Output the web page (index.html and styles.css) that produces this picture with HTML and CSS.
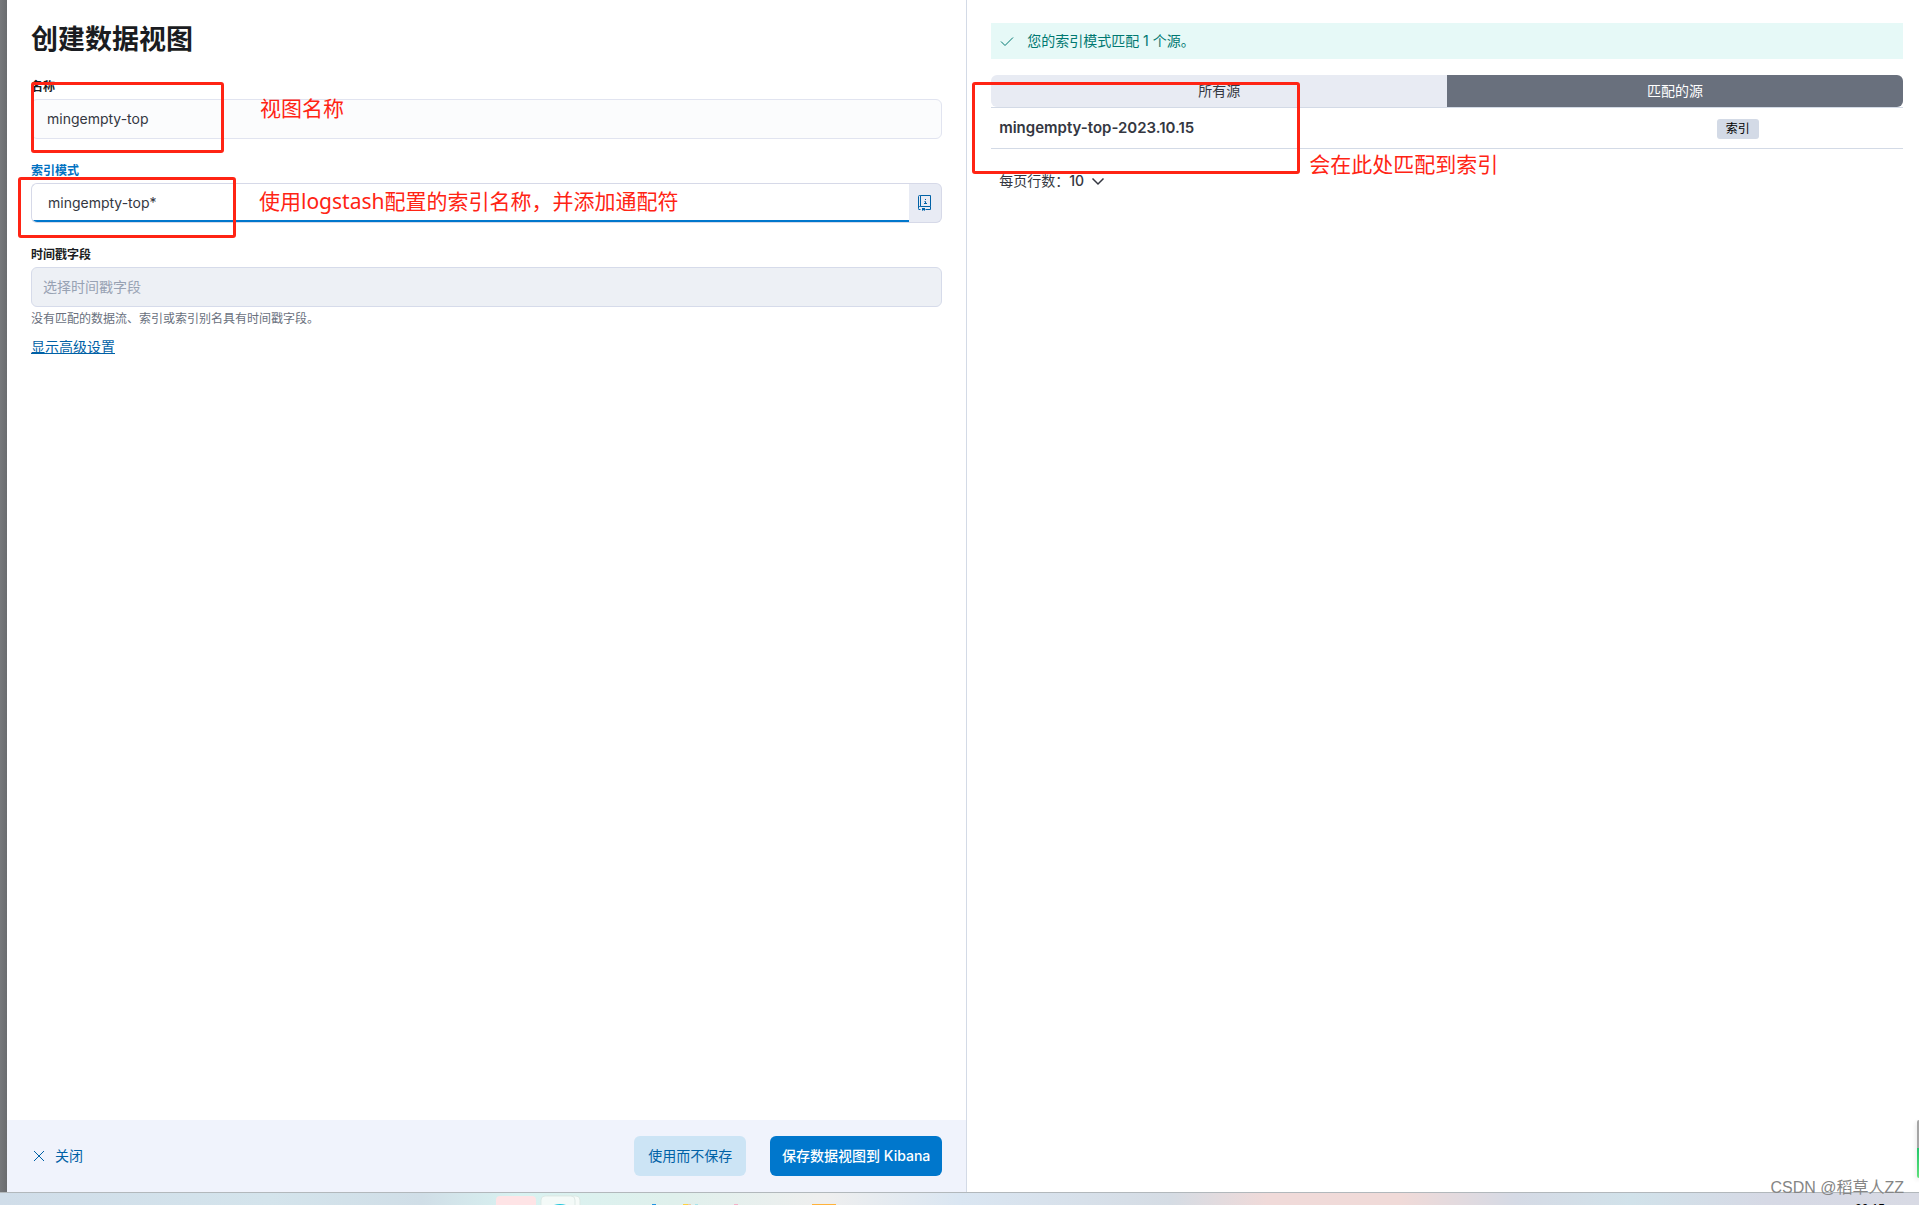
FILE: index.html
```html
<!DOCTYPE html>
<html lang="zh-CN">
<head>
<meta charset="utf-8">
<title>创建数据视图</title>
<link rel="stylesheet" href="styles.css">
</head>
<body>
<div class="workspace">
  <div class="mask"></div>
  <main class="editor">
    <form class="form">
      <h1 class="title">创建数据视图</h1>
      <div class="row">
        <label class="label" for="view-name">名称</label>
        <input class="field" id="view-name" type="text" value="mingempty-top">
      </div>
      <div class="row">
        <label class="label label-active" for="pattern">索引模式</label>
        <div class="group">
          <input class="field field-active" id="pattern" type="text" value="mingempty-top*">
          <button class="append" type="button" aria-label="帮助">
            <svg width="16" height="16" viewBox="0 0 16 16" fill="none" stroke="currentColor">
              <path d="M3.500 .5h10v11h-10zM3.500 .5h-1a1 1 0 0 0-1 1v12M1.500 13.500v-1a1 1 0 0 1 1-1h1M1.500 14.500h2M8.500 14.500h5v-3M7.500 6.500h1v2M7 8.500h3"/>
              <path d="M8 4h1v1H8zM5 13h3v3l-1.500-1L5 16z" fill="currentColor" stroke="none"/>
            </svg>
          </button>
        </div>
      </div>
      <div class="row">
        <label class="label" for="timestamp">时间戳字段</label>
        <input class="field field-disabled" id="timestamp" type="text" placeholder="选择时间戳字段" disabled>
        <p class="help">没有匹配的数据流、索引或索引别名具有时间戳字段。</p>
        <a class="advanced" href="#">显示高级设置</a>
      </div>
    </form>
    <footer class="footer">
      <button class="btn btn-close" type="button">
        <svg width="16" height="16" viewBox="0 0 16 16" fill="none" stroke="currentColor"><path d="M3 3l10 10M13 3L3 13"/></svg>
        关闭
      </button>
      <div class="actions">
        <button class="btn btn-light" type="button">使用而不保存</button>
        <button class="btn btn-primary" type="button">保存数据视图到 Kibana</button>
      </div>
    </footer>
    <div class="mark mark-name"></div>
    <div class="mark mark-pattern"></div>
    <p class="note note-name">视图名称</p>
    <p class="note note-pattern">使用logstash配置的索引名称，并添加通配符</p>
  </main>
  <aside class="preview">
    <div class="callout">
      <svg width="16" height="16" viewBox="0 0 16 16" fill="none" stroke="currentColor"><path d="M2 8.500l4 4 8-8"/></svg>
      您的索引模式匹配 1 个源。
    </div>
    <div class="tabs">
      <button class="tab" type="button">所有源</button>
      <button class="tab tab-selected" type="button">匹配的源</button>
    </div>
    <table class="sources">
      <tbody>
        <tr><td class="source-name">mingempty-top-2023.10.15</td><td><span class="badge">索引</span></td></tr>
      </tbody>
    </table>
    <button class="pager" type="button">
      <span>每页行数：<b>10</b></span>
      <svg width="16" height="16" viewBox="0 0 16 16" fill="none" stroke="currentColor" stroke-width="1.500"><path d="M2.500 5.500L8 11l5.500-5.500"/></svg>
    </button>
    <div class="mark mark-source"></div>
    <p class="note note-source">会在此处匹配到索引</p>
    <div class="side-widget"></div>
  </aside>
</div>
<div class="taskbar">
  <svg class="apps" width="340" height="12" viewBox="0 0 340 12">
    <rect x="6" y="3" width="40" height="14" rx="4" fill="#fee4e6"/>
    <rect x="54" y="3" width="36" height="14" rx="4" fill="#f6fbf9" stroke="#dce9e5"/>
    <rect x="51" y="3" width="34" height="14" rx="4" fill="#f4faf8" stroke="#dde9e6"/>
    <path d="M64 12q6-2 12 0z" fill="#20c5dc"/>
    <path d="M162 11h4v1h-4z" fill="#2194e2"/>
    <path d="M193 11h5v1h-5z" fill="#ffd23e"/>
    <path d="M198 11h3v1h-3z" fill="#f0c8a8"/>
    <path d="M205 11h3v1h-3z" fill="#a8e4ea"/>
    <path d="M244 11h4v1h-4z" fill="#f4b0c8"/>
    <path d="M322 11h24v1h-24z" fill="#ffb23a"/>
  </svg>
  <span class="clock">20:15</span>
</div>
<div class="watermark">CSDN @稻草人ZZ</div>
</body>
</html>
```
FILE: styles.css
```css
* { box-sizing: border-box; }

body {
  margin: 0;
  height: 100vh;
  display: flex;
  flex-direction: column;
  overflow: hidden;
  position: relative;
  background: #fff;
  color: #343741;
  font: 14px/20px Inter, "Noto Sans CJK SC", sans-serif;
}

p, h1 { margin: 0; }
button, input { font: inherit; color: inherit; margin: 0; }
button { border: 0; padding: 0; background: none; }

.workspace { flex: 1; display: flex; min-height: 0; }
.mask { width: 7px; background: linear-gradient(90deg, #76787b, #6a6c6f); }

/* Editor pane */
.editor {
  flex: 1;
  min-width: 0;
  display: flex;
  flex-direction: column;
  justify-content: space-between;
  position: relative;
  border-right: 1px solid #d3dae6;
}
.form { display: flex; flex-direction: column; gap: 23px; padding: 24px 24px 0; }
.title { font-size: 27px; line-height: 31px; font-weight: 700; color: #1a1c21; }
.row { display: flex; flex-direction: column; align-items: flex-start; }
.label {
  font-size: 12px;
  line-height: 18px;
  margin-bottom: 3px;
  font-weight: 600;
  color: #1a1c21;
}
.label-active { color: #0071c2; }
.field {
  width: 100%;
  height: 40px;
  padding: 0 15px 2px;
  border: 1px solid #e1e4f0;
  border-radius: 6px;
  background: #fbfcfd;
  outline: 0;
}
.group { display: flex; width: 100%; }
.field-active {
  flex: 1;
  width: auto;
  padding: 0 16px 2px;
  border-color: #d6d9e8;
  border-right: 0;
  border-radius: 6px 0 0 6px;
  background: linear-gradient(#0077cc, #0077cc) 0 100% / 100% 2px no-repeat #fff;
}
.append {
  width: 33px;
  display: flex;
  align-items: center;
  justify-content: center;
  border: 1px solid #d6d9e8;
  border-left: 0;
  border-radius: 0 6px 6px 0;
  background: #e8ebf4;
  color: #0061a6;
}
.field-disabled { padding: 0 11px 2px; background: #edf0f5; border-color: #d6dbea; }
.field-disabled::placeholder { color: #98a2b3; opacity: 1; }
.help { font-size: 12px; line-height: 18px; margin: 3px 0 9px; color: #69707d; }
.advanced { color: #0061a6; text-decoration: underline; }

.footer {
  display: flex;
  justify-content: space-between;
  padding: 16px 24px;
  background: #f0f3fc;
}
.actions { display: flex; gap: 24px; }
.btn {
  height: 40px;
  display: flex;
  align-items: center;
  justify-content: center;
  border-radius: 6px;
  font-weight: 500;
  white-space: nowrap;
}
.btn-close { gap: 8px; color: #0061a6; font-weight: 400; }
.btn-light { width: 112px; background: #cce4f5; color: #0061a6; font-weight: 400; }
.btn-primary { width: 172px; background: #0077cc; color: #fff; }

/* Preview pane */
.preview {
  flex: 0 0 49.600%;
  display: flex;
  flex-direction: column;
  position: relative;
  padding: 23px 16px 0 24px;
}
.callout {
  display: flex;
  align-items: center;
  gap: 12px;
  height: 36px;
  padding: 0 8px;
  margin-bottom: 16px;
  background: #e6f9f7;
  color: #007871;
}
.tabs { display: flex; }
.tab { flex: 1; height: 32px; background: #e8ebf3; border-radius: 6px 0 0 6px; }
.tab-selected { background: #69707d; color: #fff; border-radius: 0 6px 6px 0; }
.sources { width: 100%; border-collapse: separate; border-spacing: 0; table-layout: fixed; }
.sources td {
  height: 42px;
  padding: 0 8px;
  border-top: 1px solid #d3dae6;
  border-bottom: 1px solid #d3dae6;
}
.sources .source-name { width: 78.700%; font-size: 15px; font-weight: 600; }
.badge {
  display: inline-block;
  padding: 0 9px;
  border-radius: 3px;
  background: #d3dae6;
  color: #000;
  font-size: 12px;
  line-height: 20px;
}
.pager {
  align-self: flex-start;
  display: flex;
  align-items: center;
  gap: 6px;
  margin: 22px 8px 0;
}
.pager b { font-weight: 500; }

/* Annotations drawn over the page */
.mark { position: absolute; border: 3px solid #ff2414; border-radius: 3px; pointer-events: none; }
.mark-name { left: 24px; top: 82px; width: 193px; height: 71px; }
.mark-pattern { left: 11px; top: 177px; width: 218px; height: 61px; }
.mark-source { left: 5px; top: 82px; width: 328px; height: 92px; }
.note {
  position: absolute;
  color: #ff2414;
  font: 21px/30px "Noto Sans", "Noto Sans CJK SC", sans-serif;
  white-space: nowrap;
}
.note-name { left: 253px; top: 93px; }
.note-pattern { left: 252px; top: 186px; }
.note-source { left: 342px; top: 149px; }
.side-widget {
  position: absolute;
  right: 0;
  bottom: 14px;
  width: 2px;
  height: 58px;
  border-radius: 2px 0 0 2px;
  background: linear-gradient(#a5a5a5 48%, #22c76a 48%, #5fe07a);
  box-shadow: 0 2px 5px #00000030;
}

/* Desktop taskbar */
.taskbar {
  height: 13px;
  display: flex;
  justify-content: space-between;
  overflow: hidden;
  padding: 0 34px 0 490px;
  border-top: 1px solid #b2b8bc;
  background: linear-gradient(90deg, #d0dde9 0, #d4e4ec 14%, #d0dee7 22%, #d9f2f1 27%, #dff0ec 35%, #efefef 43%, #dae6f2 50%, #d5dce4 61%, #f0dad9 66%, #f0dad8 73%, #d5dae5 79%, #d1e2ea 85%, #d6d9e5 92%, #d8dae4);
}
.apps { overflow: visible; }
.clock { padding-top: 9px; font: 12px/14px "Liberation Sans", sans-serif; color: #000; }
.watermark {
  position: absolute;
  right: 15px;
  bottom: 5px;
  color: #858585;
  font: 16px/24px "Liberation Sans", "Noto Sans CJK SC", sans-serif;
}
```
